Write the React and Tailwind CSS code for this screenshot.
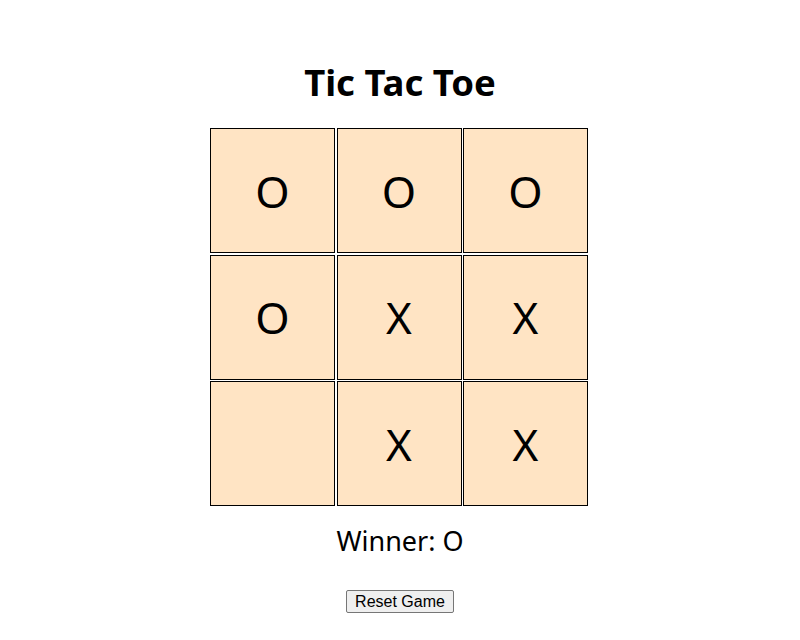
import React, { useState } from 'react';

const initial = ['O', 'O', 'O', 'O', 'X', 'X', null, 'X', 'X'];

function winnerOf(cells) {
  const lines = [
    [0, 1, 2], [3, 4, 5], [6, 7, 8],
    [0, 3, 6], [1, 4, 7], [2, 5, 8],
    [0, 4, 8], [2, 4, 6],
  ];
  for (const [a, b, c] of lines) {
    if (cells[a] && cells[a] === cells[b] && cells[a] === cells[c]) return cells[a];
  }
  return null;
}

export default function App() {
  const [cells, setCells] = useState(initial);
  const [xNext, setXNext] = useState(true);
  const winner = winnerOf(cells);

  const play = (i) => {
    if (cells[i] || winner) return;
    const next = cells.slice();
    next[i] = xNext ? 'X' : 'O';
    setCells(next);
    setXNext(!xNext);
  };

  const reset = () => {
    setCells(Array(9).fill(null));
    setXNext(true);
  };

  return (
    <div className="min-h-screen bg-white flex flex-col items-center pt-[58px] text-black font-['Noto_Sans',sans-serif]">
      <h1 className="text-[36.5px] font-bold leading-[48px] mb-[22px]">Tic Tac Toe</h1>

      <div className="grid grid-cols-[repeat(3,125px)] grid-rows-[repeat(3,125px)] gap-[1.5px] -ml-[2px]">
        {cells.map((v, i) => (
          <div
            key={i}
            onClick={() => play(i)}
            className="bg-[#ffe4c4] border border-black flex items-center justify-center text-[44px] leading-none cursor-pointer"
          >
            {v}
          </div>
        ))}
      </div>

      <div className="mt-[17px] text-[27px] leading-[36px]">
        {winner ? `Winner: ${winner}` : `Next player: ${xNext ? 'X' : 'O'}`}
      </div>

      <button
        onClick={reset}
        className="mt-[31px] bg-[#efefef] border border-[#767676] rounded-[2px] px-[8px] py-[1px] text-[16px] leading-[19px] font-['Liberation_Sans',sans-serif]"
      >
        Reset Game
      </button>
    </div>
  );
}
